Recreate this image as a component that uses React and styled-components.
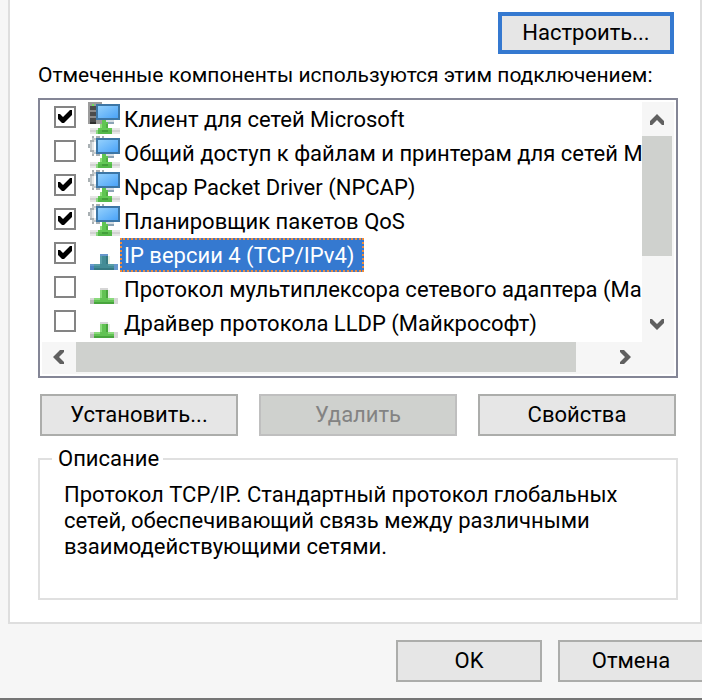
import React, { useState } from "react";
import styled, { createGlobalStyle } from "styled-components";

const GlobalStyle = createGlobalStyle`
  * {
    box-sizing: border-box;
  }

  body {
    margin: 0;
    background: #f6f6f6;
    color: #000;
    font-family: Roboto, "Liberation Sans", sans-serif;
    font-size: 22px;
    line-height: 26px;
  }

  button {
    font: inherit;
  }
`;

const Window = styled.main`
  display: flex;
  flex-direction: column;
  min-height: 100vh;
  overflow: hidden;
  border-bottom: 2px solid #757575;
`;

const Panel = styled.section`
  display: flex;
  flex-direction: column;
  margin-left: 8px;
  padding: 12px 22px 22px 28px;
  background: #fff;
  border: 2px solid #dedede;
  border-top: 0;
`;

const Button = styled.button`
  height: 42px;
  padding: 0 10px;
  background: #e6e6e6;
  border: 2px solid #acadab;
  color: #000;
  white-space: nowrap;

  &:disabled {
    background: #cfd1ce;
    border-color: #bfbfbf;
    color: #838383;
  }
`;

const ConfigureButton = styled(Button)`
  align-self: flex-end;
  width: 176px;
  margin-right: 4px;
  border: 4px solid #3579d0;
`;

const ListLabel = styled.h2`
  margin: 8px 0 10px;
  font-size: 21px;
  font-weight: 400;
  white-space: nowrap;
`;

const ListBox = styled.div`
  display: grid;
  grid-template-columns: minmax(0, 1fr) 32px;
  grid-template-rows: auto 32px;
  padding: 2px;
  border: 2px solid #848696;
`;

const List = styled.ul`
  margin: 0;
  padding: 0 0 2px;
  overflow: hidden;
  list-style: none;
`;

const Row = styled.li`
  display: flex;
  height: 34px;
  padding-left: 12px;
`;

const CheckBox = styled.input`
  appearance: none;
  flex: none;
  width: 22px;
  height: 22px;
  margin: 4px 12px 0 0;
  padding: 2px;
  background: #fff;
  border: 2px solid #848484;

  &:checked::before {
    content: "";
    display: block;
    width: 14px;
    height: 14px;
    background: #000;
    clip-path: polygon(0 4px, 2px 4px, 5px 7px, 12px 0, 14px 0, 14px 5px, 6px 13px, 4px 13px, 0 9px);
  }
`;

const ItemLabel = styled.label`
  display: flex;
  align-items: flex-start;
`;

const ItemText = styled.span`
  height: 34px;
  padding: 0 8px 0 2px;
  line-height: 32px;
  white-space: nowrap;
  border: 2px dotted ${props => (props.$selected ? "#f08c3c" : "transparent")};
  background: ${props => (props.$selected ? "#3579d0" : "transparent")};
  color: ${props => (props.$selected ? "#fff" : "#000")};
`;

const IconSvg = styled.svg`
  display: block;
  flex: none;
  width: 32px;
  height: 34px;
`;

const ScrollBar = styled.div`
  display: flex;
  flex-direction: ${props => (props.$vertical ? "column" : "row")};
  grid-column: ${props => (props.$vertical ? "auto" : "1 / -1")};
  padding: ${props => (props.$vertical ? "0 2px 0 0" : "0 32px 2px 0")};
  background: #f6f6f6;
`;

const ScrollTrack = styled.div`
  display: flex;
  flex: 1;
  flex-direction: ${props => (props.$vertical ? "column" : "row")};
`;

const ScrollThumb = styled.div`
  flex: 0 0 ${props => props.$size};
  background: #cfd1ce;
`;

const ScrollButton = styled.button`
  display: flex;
  flex: 0 0 34px;
  align-items: center;
  justify-content: center;
  padding: 0;
  background: none;
  border: 0;
`;

const ButtonRow = styled.div`
  display: grid;
  grid-template-columns: repeat(3, 1fr);
  gap: 21px;
  margin: 16px 2px 0;
`;

const Description = styled.fieldset`
  min-height: 154px;
  margin: 10px 0 0;
  padding: 10px 24px 24px;
  border: 2px solid #e0e0e0;

  legend {
    margin-left: -12px;
    padding: 0 4px 0 6px;
  }

  p {
    margin: 0;
  }
`;

const Footer = styled.footer`
  display: flex;
  justify-content: flex-end;
  gap: 16px;
  margin-right: -2px;
  padding: 16px 0;
`;

const FooterButton = styled(Button)`
  flex: 0 0 146px;
`;

function Arrow({ points }) {
  return (
    <svg width="16" height="16" viewBox="0 0 16 16" aria-hidden="true">
      <polygon points={points} fill="#606060" />
    </svg>
  );
}

function ServerIcon() {
  return (
    <g>
      <rect width="14" height="22" fill="#9c9c9c" />
      <rect x="2" y="4" width="6" height="18" fill="#4c4c4c" />
      <rect x="2" y="8" width="6" height="2" fill="#8a8a8a" />
      <rect x="2" y="14" width="6" height="2" fill="#8a8a8a" />
      <rect x="2" y="20" width="6" height="2" fill="#303030" />
      <rect x="4" y="2" width="2" height="2" fill="#6fe05a" />
    </g>
  );
}

function GearIcon() {
  return (
    <g fill="#a9b0b3">
      <path d="M4 0h2v2H4zM8 0h4v2H8zM14 0h2v2h-2zM2 4h4v2H2zM0 8h2v4H0zM2 14h4v2H2zM4 18h2v2H4zM8 18h4v2H8z" />
      <path d="M4 2h4v2H4zM2 6h2v8H2zM4 16h4v2H4z" fill="#c3c9cb" />
      <path d="M8 2h4v2H8zM4 6h2v8H4zM6 4h2v2H6zM6 14h2v2H6z" fill="#e4e7e8" />
    </g>
  );
}

function ComputerIcon({ server }) {
  return (
    <IconSvg viewBox="0 0 32 34" shapeRendering="crispEdges" aria-hidden="true">
      <defs>
        <linearGradient id="screen" x1="0" y1="0" x2="1" y2="1">
          <stop offset="0" stopColor="#93d0fc" />
          <stop offset="1" stopColor="#4ba3f8" />
        </linearGradient>
      </defs>
      {server ? <ServerIcon /> : <GearIcon />}
      <rect x="2" y="26" width="30" height="6" fill="#e6e6e6" />
      <rect x="2" y="28" width="30" height="2" fill="#d2d2d2" />
      <rect x="8" y="2" width="24" height="16" fill="#3d76a5" />
      <rect x="10" y="4" width="20" height="12" fill="url(#screen)" />
      <rect x="14" y="18" width="12" height="2" fill="#d5dde3" />
      <rect x="16" y="20" width="10" height="2" fill="#8ba3b5" />
      <path d="M14 18h4v2h-4zM14 20h6v2h-6zM12 22h8v4h-8z" fill="#5fc552" />
      <rect x="12" y="22" width="2" height="4" fill="#8ede7c" />
      <rect x="18" y="22" width="2" height="4" fill="#4fae43" />
      <rect x="10" y="26" width="14" height="2" fill="#62c855" />
      <rect x="8" y="28" width="16" height="4" fill="#55b94a" />
      <rect x="8" y="28" width="2" height="4" fill="#8ed884" />
      <rect x="14" y="28" width="6" height="2" fill="#429f3a" />
    </IconSvg>
  );
}

function ProtocolIcon({ selected }) {
  const cap = selected ? "#6797cc" : "#d6d6d6";
  const body = selected ? "#438c96" : "#61c253";
  const light = selected ? "#579da7" : "#8bda7d";
  const dark = selected ? "#367982" : "#48a53d";

  return (
    <IconSvg viewBox="0 0 32 34" shapeRendering="crispEdges" aria-hidden="true">
      <rect x="12" y="16" width="8" height="2" fill={cap} />
      <rect x="20" y="18" width="2" height="8" fill="#e3eee1" />
      <rect x="12" y="18" width="8" height="8" fill={body} />
      <rect x="12" y="18" width="2" height="8" fill={light} />
      <rect x="18" y="18" width="2" height="8" fill={dark} />
      <rect x="2" y="26" width="28" height="6" fill={cap} />
      <rect x="2" y="28" width="4" height="4" fill={selected ? "#4d82c4" : "#b9b9b9"} />
      <rect x="6" y="26" width="20" height="6" fill={body} />
      <rect x="6" y="26" width="20" height="2" fill={light} />
      <rect x="12" y="26" width="8" height="2" fill={body} />
      <rect x="6" y="30" width="20" height="2" fill={dark} />
    </IconSvg>
  );
}

const components = [
  { id: "client", name: "Клиент для сетей Microsoft", icon: "server", checked: true },
  { id: "share", name: "Общий доступ к файлам и принтерам для сетей Microsoft", icon: "gear", checked: false },
  { id: "npcap", name: "Npcap Packet Driver (NPCAP)", icon: "gear", checked: true },
  { id: "qos", name: "Планировщик пакетов QoS", icon: "gear", checked: true },
  { id: "ipv4", name: "IP версии 4 (TCP/IPv4)", icon: "protocol", checked: true },
  { id: "mux", name: "Протокол мультиплексора сетевого адаптера (Майкрософт)", icon: "protocol", checked: false },
  { id: "lldp", name: "Драйвер протокола LLDP (Майкрософт)", icon: "protocol", checked: false }
];

function ComponentRow({ item, selected, onToggle }) {
  return (
    <Row>
      <CheckBox type="checkbox" id={item.id} checked={item.checked} onChange={() => onToggle(item.id)} />
      <ItemLabel htmlFor={item.id}>
        {item.icon === "protocol" ? (
          <ProtocolIcon selected={selected} />
        ) : (
          <ComputerIcon server={item.icon === "server"} />
        )}
        <ItemText $selected={selected}>{item.name}</ItemText>
      </ItemLabel>
    </Row>
  );
}

function App() {
  const [items, setItems] = useState(components);

  const toggle = id =>
    setItems(items.map(item => (item.id === id ? { ...item, checked: !item.checked } : item)));

  return (
    <Window>
      <GlobalStyle />
      <Panel>
        <ConfigureButton>Настроить...</ConfigureButton>
        <ListLabel>Отмеченные компоненты используются этим подключением:</ListLabel>
        <ListBox>
          <List>
            {items.map(item => (
              <ComponentRow key={item.id} item={item} selected={item.id === "ipv4"} onToggle={toggle} />
            ))}
          </List>
          <ScrollBar $vertical>
            <ScrollButton aria-label="Вверх">
              <Arrow points="8,3 15,10 15,14 13,14 8,9 3,14 1,14 1,10" />
            </ScrollButton>
            <ScrollTrack $vertical>
              <ScrollThumb $size="70%" />
            </ScrollTrack>
            <ScrollButton aria-label="Вниз">
              <Arrow points="8,13 15,6 15,2 13,2 8,7 3,2 1,2 1,6" />
            </ScrollButton>
          </ScrollBar>
          <ScrollBar>
            <ScrollButton aria-label="Влево">
              <Arrow points="2,8 9,1 13,1 13,3 8,8 13,13 13,15 9,15" />
            </ScrollButton>
            <ScrollTrack>
              <ScrollThumb $size="94%" />
            </ScrollTrack>
            <ScrollButton aria-label="Вправо">
              <Arrow points="14,8 7,1 3,1 3,3 8,8 3,13 3,15 7,15" />
            </ScrollButton>
          </ScrollBar>
        </ListBox>
        <ButtonRow>
          <Button>Установить...</Button>
          <Button disabled>Удалить</Button>
          <Button>Свойства</Button>
        </ButtonRow>
        <Description>
          <legend>Описание</legend>
          <p>
            Протокол TCP/IP. Стандартный протокол глобальных сетей, обеспечивающий связь между
            различными взаимодействующими сетями.
          </p>
        </Description>
      </Panel>
      <Footer>
        <FooterButton>OK</FooterButton>
        <FooterButton>Отмена</FooterButton>
      </Footer>
    </Window>
  );
}

export default App;
